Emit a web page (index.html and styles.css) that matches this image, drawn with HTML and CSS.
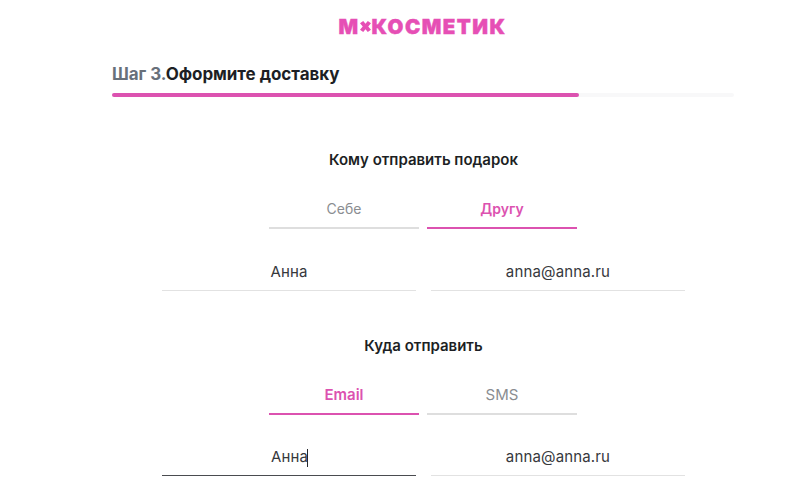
FILE: index.html
```html
<!DOCTYPE html>
<html lang="ru">
<head>
    <meta charset="UTF-8">
    <title>Оформите доставку</title>
    <link rel="stylesheet" href="styles.css">
</head>
<body>
    <div class="logo">
        <span>М</span>
        <svg class="logo-star" viewBox="0 0 12 12">
            <path d="M0 2.5 L3.5 0 L6 3 L8.5 0 L12 2.5 L9 6 L12 9.5 L8.5 12 L6 9 L3.5 12 L0 9.5 L3 6 Z"/>
        </svg>
        <span>КОСМЕТИК</span>
    </div>

    <div class="step">
        <h1 class="step-title"><span class="step-num">Шаг 3.</span>Оформите доставку</h1>
        <div class="progress"><div class="progress-fill"></div></div>
    </div>

    <div class="form">
        <section class="group">
            <h2 class="group-title">Кому отправить подарок</h2>
            <div class="tabs">
                <div class="tab">Себе</div>
                <div class="tab active">Другу</div>
            </div>
            <div class="fields">
                <div class="field">Анна</div>
                <div class="field">anna@anna.ru</div>
            </div>
        </section>

        <section class="group group-second">
            <h2 class="group-title">Куда отправить</h2>
            <div class="tabs">
                <div class="tab active latin">Email</div>
                <div class="tab latin">SMS</div>
            </div>
            <div class="fields fields-second">
                <div class="field focused">Анна<span class="caret"></span></div>
                <div class="field">anna@anna.ru</div>
            </div>
        </section>
    </div>
</body>
</html>
```

FILE: styles.css
```css
* {
    margin: 0;
    padding: 0;
    box-sizing: border-box;
}

body {
    width: 800px;
    height: 500px;
    overflow: hidden;
    background: #fff;
    font-family: 'Inter', 'Liberation Sans', sans-serif;
    color: #1d1f24;
}

.logo {
    display: flex;
    align-items: center;
    justify-content: center;
    width: 523px;
    height: 26px;
    margin-top: 13px;
    margin-left: 161px;
    color: #e64fb5;
    font-size: 20.5px;
    font-weight: 900;
    letter-spacing: 1.45px;
    -webkit-text-stroke: 0.4px #e64fb5;
}

.logo-star {
    width: 11px;
    height: 11px;
    margin: 0 1px 0 0;
    fill: #e64fb5;
}

.step {
    width: 622px;
    margin-left: 112px;
    margin-top: 22px;
}

.step-title {
    font-size: 17px;
    font-weight: 700;
    letter-spacing: -0.05px;
    line-height: 26px;
}

.step-num {
    color: #68707a;
}

.progress {
    height: 4px;
    margin-top: 6px;
    background: #f8f8f9;
    border-radius: 2px;
}

.progress-fill {
    width: 467px;
    height: 4px;
    background: #dc52b0;
    border-radius: 2px;
}

.form {
    width: 523px;
    margin-left: 162px;
    margin-top: 52px;
}

.group-second {
    margin-top: 44px;
}

.group-title {
    font-size: 15px;
    font-weight: 600;
    line-height: 22px;
    text-align: center;
}

.tabs {
    display: flex;
    gap: 8px;
    margin-top: 22px;
    margin-left: 107px;
}

.tab {
    width: 150px;
    height: 36px;
    border-bottom: 2px solid #dedede;
    color: #8a8d91;
    font-size: 14px;
    line-height: 32px;
    text-align: center;
}

.tab.latin {
    font-size: 15px;
}

.tab.active {
    border-bottom-color: #dc52b0;
    color: #dc52b0;
    font-weight: 600;
}

.fields {
    display: flex;
    justify-content: space-between;
    margin-top: 24px;
}

.fields-second {
    margin-top: 23px;
}

.field {
    width: 254px;
    height: 38px;
    border-bottom: 1px solid #e2e2e2;
    font-size: 15px;
    letter-spacing: 0.15px;
    line-height: 38px;
    text-align: center;
    color: #36383c;
}

.field.focused {
    border-bottom-color: #4a4c50;
}

.caret {
    display: inline-block;
    width: 1px;
    height: 18px;
    margin-left: -1px;
    margin-right: -1px;
    background: #26282c;
    vertical-align: middle;
}
```
